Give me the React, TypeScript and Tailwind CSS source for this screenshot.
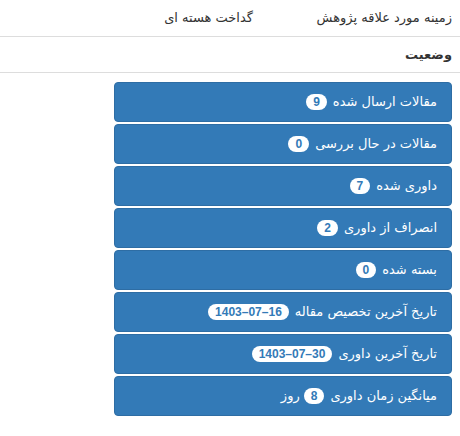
const stats: { label: string; value: string; suffix?: string }[] = [
  { label: "مقالات ارسال شده", value: "9" },
  { label: "مقالات در حال بررسی", value: "0" },
  { label: "داوری شده", value: "7" },
  { label: "انصراف از داوری", value: "2" },
  { label: "بسته شده", value: "0" },
  { label: "تاریخ آخرین تخصیص مقاله", value: "1403–07–16" },
  { label: "تاریخ آخرین داوری", value: "1403–07–30" },
  { label: "میانگین زمان داوری", value: "8", suffix: "روز" },
];

const Badge = ({ value }: { value: string }) => (
  <span
    dir="ltr"
    className="inline-flex h-4 items-center rounded-full bg-white px-[7px] text-[12px] font-bold leading-none text-[#337ab7] [font-family:'Liberation_Sans',Arial,sans-serif]"
  >
    {value}
  </span>
);

export default function App() {
  return (
    <div
      dir="rtl"
      className="w-[460px] h-[436px] bg-white text-[13px] text-[#333] [font-family:'DejaVu_Sans','Liberation_Sans',sans-serif]"
    >
      <div className="flex h-[37px] items-center border-b border-[#ddd]">
        <div className="w-[199px] px-2">زمینه مورد علاقه پژوهش</div>
        <div className="px-2">گداخت هسته ای</div>
      </div>
      <div className="flex h-[36px] items-center border-b border-[#ddd] px-2 font-bold">
        وضعیت
      </div>
      <div className="flex flex-col items-start gap-[2px] px-2 pt-[9px]">
        {stats.map((s) => (
          <div
            key={s.label}
            className="flex h-10 w-[338px] items-center gap-[6px] rounded-[4px] border border-[#2e6da4] bg-[#337ab7] pr-[14px] text-white"
          >
            <span>{s.label}</span>
            <Badge value={s.value} />
            {s.suffix && <span className="-mr-[2px]">{s.suffix}</span>}
          </div>
        ))}
      </div>
    </div>
  );
}
